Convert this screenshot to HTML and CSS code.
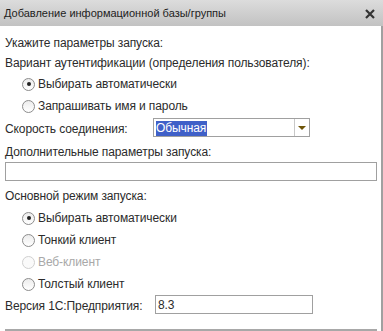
FILE: index.html
```html
<!DOCTYPE html>
<html lang="ru">

<head>
  <meta charset="UTF-8">
  <title>Добавление информационной базы/группы</title>
  <link rel="stylesheet" href="styles.css">
</head>

<body>
  <div class="dialog">
    <div class="title-bar">
      <span class="title">Добавление информационной базы/группы</span>
      <svg class="close" width="10" height="10" viewBox="0 0 10 10">
        <path d="M1 1 L9 9 M9 1 L1 9" stroke="#333" stroke-width="2.2" />
      </svg>
    </div>

    <div class="content">
      <div class="row h19">Укажите параметры запуска:</div>
      <div class="row h22">Вариант аутентификации (определения пользователя):</div>

      <label class="row radio-row h20"><span class="radio checked"></span>Выбирать автоматически</label>
      <label class="row radio-row h24"><span class="radio"></span>Запрашивать имя и пароль</label>

      <div class="row field-row h24">
        <span class="field-label">Скорость соединения:</span>
        <div class="combo">
          <span class="combo-text"><span class="selected">Обычная</span></span>
          <span class="combo-btn"><span class="arrow"></span></span>
        </div>
      </div>

      <div class="row h20">Дополнительные параметры запуска:</div>
      <div class="row h23"><div class="input wide"></div></div>

      <div class="row h22">Основной режим запуска:</div>
      <label class="row radio-row h22"><span class="radio checked"></span>Выбирать автоматически</label>
      <label class="row radio-row h22"><span class="radio"></span>Тонкий клиент</label>
      <label class="row radio-row h22 disabled"><span class="radio"></span>Веб-клиент</label>
      <label class="row radio-row h22"><span class="radio"></span>Толстый клиент</label>

      <div class="row field-row h20">
        <span class="field-label">Версия 1С:Предприятия:</span>
        <div class="input version">8.3</div>
      </div>

      <div class="separator"></div>
    </div>
  </div>
</body>

</html>
```

FILE: styles.css
```css
body {
  margin: 0;
  background: #fff;
  font-family: "Liberation Sans", Arial, sans-serif;
  font-size: 12px;
  letter-spacing: -0.1px;
  color: #2b2b2b;
}

.dialog {
  width: 383px;
  height: 331px;
  overflow: hidden;
}

.title-bar {
  height: 26px;
  display: flex;
  align-items: center;
  justify-content: space-between;
  padding: 0 8px 0 4px;
  background: linear-gradient(#dcdcdc, #c2c2c2);
  box-sizing: border-box;
}

.title {
  color: #222;
  font-size: 11px;
  letter-spacing: 0;
}

.close {
  margin-top: 1px;
}

.content {
  height: 305px;
  box-sizing: border-box;
  padding: 7px 0 0 5px;
  border-right: 2px solid #a0a0a0;
}

.row {
  display: flex;
  align-items: center;
}

.h19 { height: 19px; }
.h20 { height: 20px; }
.h22 { height: 22px; }
.h23 { height: 23px; align-items: flex-start; }
.h24 { height: 24px; }

.radio-row {
  padding-left: 17px;
}

.radio {
  width: 11px;
  height: 11px;
  border: 1px solid #8c8c8c;
  border-radius: 50%;
  background: linear-gradient(#ececec, #fff);
  margin-right: 3px;
  display: flex;
  align-items: center;
  justify-content: center;
}

.radio.checked::after {
  content: "";
  width: 4px;
  height: 4px;
  border-radius: 50%;
  background: #222;
}

.disabled {
  color: #a8a8a8;
}

.disabled .radio {
  border-color: #d0d0d0;
  background: #fafafa;
}

.field-row {
  align-items: flex-start;
}

.field-label {
  width: 148px;
  margin-top: 4px;
}

.combo {
  width: 157px;
  height: 19px;
  box-sizing: border-box;
  border: 1px solid #a0a0a0;
  display: flex;
}

.combo-text {
  flex: 1;
  padding: 2px 0 0 2px;
}

.selected {
  background: #3f60c8;
  color: #fff;
  padding: 0 1px 1px 0;
}

.combo-btn {
  width: 14px;
  border-left: 1px solid #c8c8c8;
  display: flex;
  align-items: center;
  justify-content: center;
}

.arrow {
  width: 0;
  height: 0;
  border-left: 4px solid transparent;
  border-right: 4px solid transparent;
  border-top: 4px solid #6e5408;
}

.input {
  height: 19px;
  box-sizing: border-box;
  border: 1px solid #a0a0a0;
  padding: 2px 0 0 2px;
}

.wide {
  width: 372px;
}

.version {
  width: 158px;
  margin-left: 2px;
}

.separator {
  margin-top: 14px;
  width: 372px;
  height: 2px;
  background: #a8a8a8;
}
```
